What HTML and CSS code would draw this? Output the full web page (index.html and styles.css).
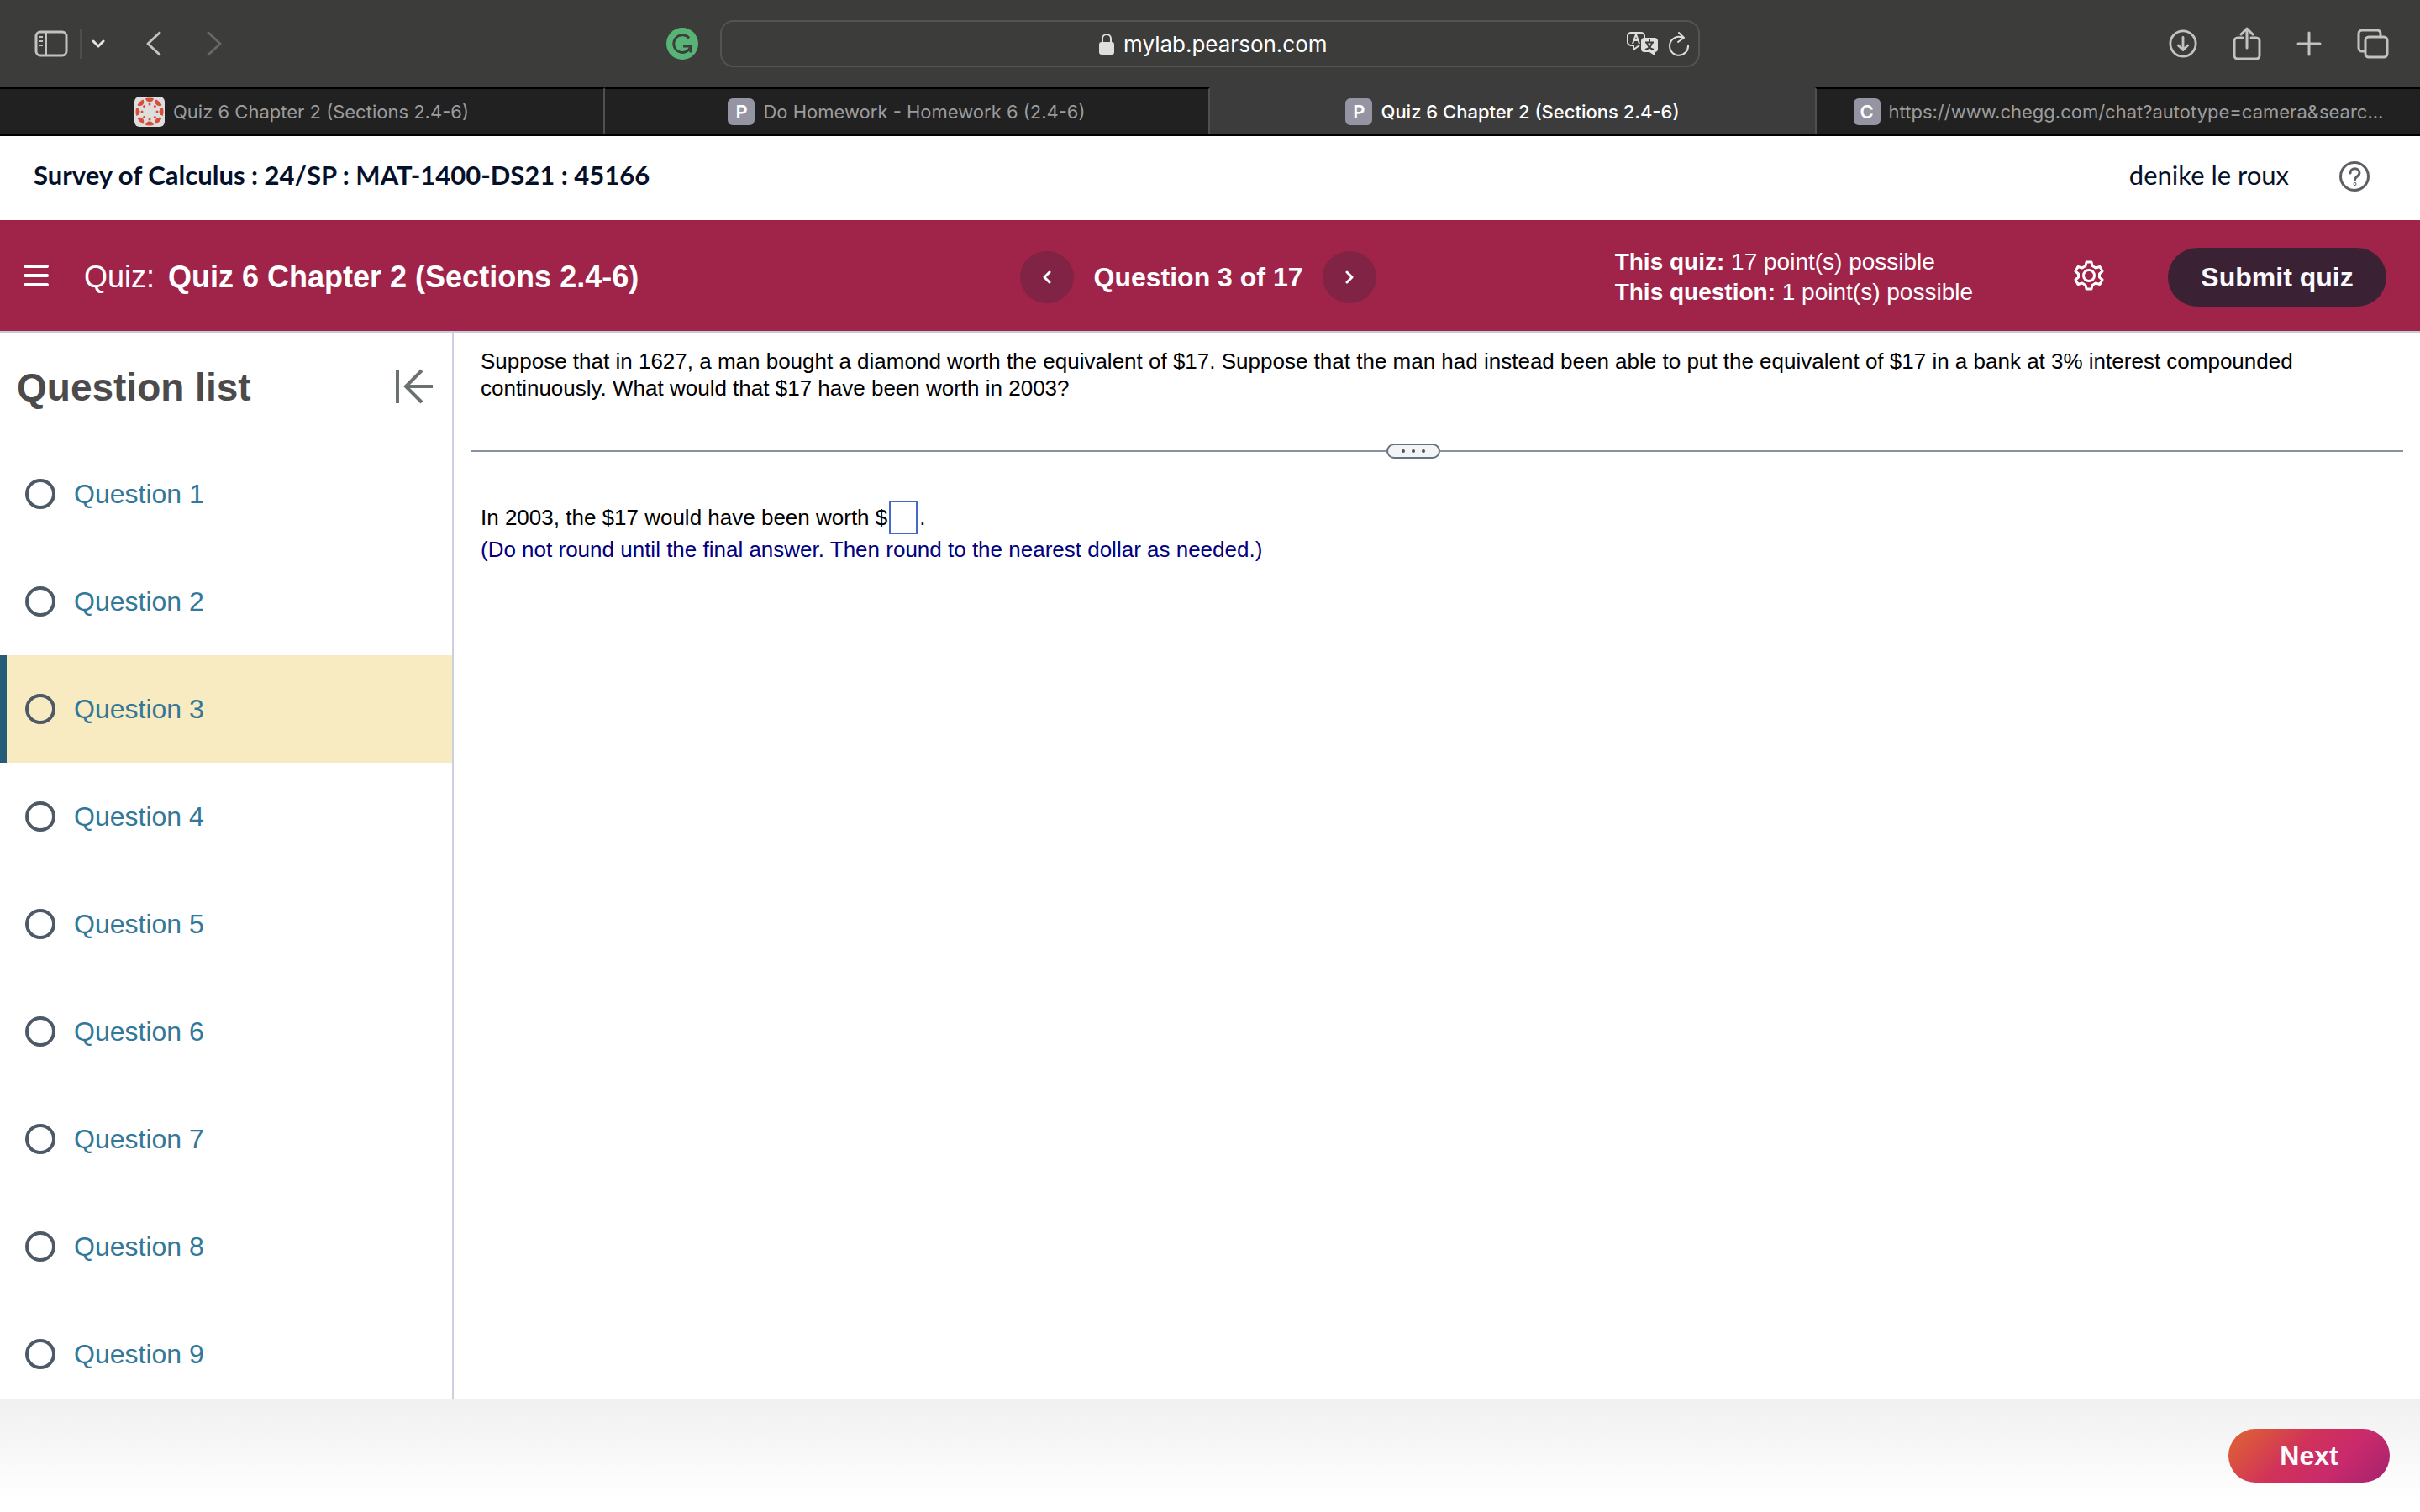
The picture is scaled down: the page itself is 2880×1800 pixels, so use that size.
FILE: index.html
```html
<!DOCTYPE html>
<html lang="en">
<head>
<meta charset="utf-8">
<title>Quiz 6 Chapter 2 (Sections 2.4-6)</title>
<link rel="stylesheet" href="styles.css">
</head>
<body>
<div class="toolbar">
  <div class="tools-left">
    <button class="icon-btn" aria-label="Show sidebar"><svg width="40" height="32" viewBox="0 0 40 32" fill="none" stroke="#c2c2c0" stroke-width="3"><rect x="2" y="2" width="36" height="28" rx="5"/><path d="M14 2v28" stroke-width="2"/><path d="M6 8h4M6 13h4M6 18h4" stroke-width="2"/></svg></button>
    <span class="tool-divider"></span>
    <button class="icon-btn" aria-label="Tab groups"><svg width="16" height="12" viewBox="0 0 16 12" fill="none" stroke="#e4e4e2" stroke-width="3" stroke-linecap="round" stroke-linejoin="round"><path d="M2 3l6 6 6-6"/></svg></button>
    <button class="icon-btn back" aria-label="Back"><svg width="20" height="32" viewBox="0 0 20 32" fill="none" stroke="#c2c2c0" stroke-width="3" stroke-linecap="round" stroke-linejoin="round"><path d="M17 3L3 16l14 13"/></svg></button>
    <button class="icon-btn forward" aria-label="Forward"><svg width="20" height="32" viewBox="0 0 20 32" fill="none" stroke="#676765" stroke-width="3" stroke-linecap="round" stroke-linejoin="round"><path d="M3 3l14 13L3 29"/></svg></button>
    <button class="icon-btn grammar" aria-label="Grammar check"><svg width="38" height="38" viewBox="0 0 38 38" fill="none"><circle cx="19" cy="19" r="19" fill="#58b476"/><path d="M27 12.500a10.300 10.300 0 1 0 2 9.500H20M29 22v7.500" stroke="#3b403b" stroke-width="3"/></svg></button>
  </div>
  <div class="address">
    <div class="address-text">
      <svg width="20" height="28" viewBox="0 0 20 28"><rect x="1" y="12" width="18" height="15" rx="3" fill="#dededc"/><path d="M5 13V8a5 5 0 0 1 10 0v5" fill="none" stroke="#dededc" stroke-width="2"/></svg>
      <input class="address-input" type="text" value="mylab.pearson.com" aria-label="Address">
    </div>
    <button class="icon-btn" aria-label="Translate"><svg width="40" height="30" viewBox="0 0 40 30" fill="none"><path d="M16 17l-7 5v-5H6a4 4 0 0 1-4-4V6a4 4 0 0 1 4-4h12a4 4 0 0 1 4 4v2" stroke="#dededc" stroke-width="2"/><path d="M8 15l4-11 4 11M9 11h6" stroke="#dededc" stroke-width="2"/><path d="M22 8h12a4 4 0 0 1 4 4v9a4 4 0 0 1-4 4v4l-6-4h-6a4 4 0 0 1-4-4v-9a4 4 0 0 1 4-4z" fill="#dededc"/><path d="M28 10v3M23 13.500h10M31 14c-1 4-4 7-8 8M25 14c1 4 4 7 8 8" stroke="#3c3c3a" stroke-width="2"/></svg></button>
    <button class="icon-btn" aria-label="Reload"><svg width="26" height="30" viewBox="0 0 26 30" fill="none" stroke="#dededc" stroke-width="2" stroke-linecap="round" stroke-linejoin="round"><path d="M17 7.500A11 11 0 1 0 24 17M13 2l6 6-7 5"/></svg></button>
  </div>
  <div class="tools-right">
    <button class="icon-btn" aria-label="Downloads"><svg width="34" height="34" viewBox="0 0 36 36" fill="none" stroke="#c2c2c0" stroke-width="3" stroke-linecap="round" stroke-linejoin="round"><circle cx="18" cy="18" r="16"/><path d="M18 10v15M12 20l6 6 6-6"/></svg></button>
    <button class="icon-btn" aria-label="Share"><svg width="34" height="42" viewBox="0 0 34 42" fill="none" stroke="#c2c2c0" stroke-width="3" stroke-linecap="round" stroke-linejoin="round"><path d="M12 14H6a4 4 0 0 0-4 4v17a4 4 0 0 0 4 4h22a4 4 0 0 0 4-4V18a4 4 0 0 0-4-4h-6M17 26V4M10 10l7-7 7 7"/></svg></button>
    <button class="icon-btn" aria-label="New tab"><svg width="30" height="30" viewBox="0 0 30 30" fill="none" stroke="#c2c2c0" stroke-width="3" stroke-linecap="round"><path d="M15 2v26M2 15h26"/></svg></button>
    <button class="icon-btn" aria-label="Tab overview"><svg width="38" height="36" viewBox="0 0 38 36" fill="none" stroke="#c2c2c0" stroke-width="3"><rect x="10" y="10" width="26" height="24" rx="4"/><path d="M10 27H6a4 4 0 0 1-4-4V6a4 4 0 0 1 4-4h18a4 4 0 0 1 4 4v4"/></svg></button>
  </div>
</div>
<nav class="tabs" aria-label="Browser tabs">
  <a class="tab" href="#"><svg width="36" height="36" viewBox="0 0 36 36"><defs><clipPath id="disc"><circle cx="18" cy="18" r="16.500"/></clipPath></defs><rect width="36" height="36" rx="6" fill="#dedede"/><g fill="#d64f3c" clip-path="url(#disc)"><circle cx="18" cy="1.500" r="5"/><circle cx="18" cy="34.500" r="5"/><circle cx="1.500" cy="18" r="5"/><circle cx="34.500" cy="18" r="5"/><circle cx="6.300" cy="6.300" r="5"/><circle cx="29.700" cy="6.300" r="5"/><circle cx="6.300" cy="29.700" r="5"/><circle cx="29.700" cy="29.700" r="5"/><circle cx="18" cy="9" r="1.500"/><circle cx="18" cy="27" r="1.500"/><circle cx="9" cy="18" r="1.500"/><circle cx="27" cy="18" r="1.500"/><circle cx="11.600" cy="11.600" r="1.500"/><circle cx="24.400" cy="11.600" r="1.500"/><circle cx="11.600" cy="24.400" r="1.500"/><circle cx="24.400" cy="24.400" r="1.500"/></g></svg><span class="tab-title">Quiz 6 Chapter 2 (Sections 2.4-6)</span></a>
  <a class="tab" href="#"><span class="badge">P</span><span class="tab-title">Do Homework - Homework 6 (2.4-6)</span></a>
  <a class="tab active" href="#"><span class="badge">P</span><span class="tab-title">Quiz 6 Chapter 2 (Sections 2.4-6)</span></a>
  <a class="tab" href="#"><span class="badge">C</span><span class="tab-title">https://www.chegg.com/chat?autotype=camera&amp;searc...</span></a>
</nav>
<header class="course">
  <h1 class="course-name">Survey of Calculus : 24/SP : MAT-1400-DS21 : 45166</h1>
  <span class="user">denike le roux</span>
  <button class="icon-btn" aria-label="Help"><svg width="36" height="36" viewBox="0 0 36 36" fill="none" stroke="#5d6063" stroke-width="3" stroke-linecap="round"><circle cx="18" cy="18" r="16.500"/><path d="M13 14c0-7 11-7 11 0 0 4-5.500 4-5.500 8"/><circle cx="18.500" cy="27" r="0.500"/></svg></button>
</header>
<div class="quizbar">
  <div class="quiz-title">
    <button class="icon-btn menu" aria-label="Menu"><svg width="30" height="28" viewBox="0 0 30 28" stroke="#fff" stroke-width="4" stroke-linecap="round"><path d="M2 3h26M2 14h26M2 25h26"/></svg></button>
    <h2 class="quiz-name"><span class="quiz-label">Quiz:</span> Quiz 6 Chapter 2 (Sections 2.4-6)</h2>
  </div>
  <div class="stepper">
    <button class="step" aria-label="Previous question"><svg width="12" height="16" viewBox="0 0 12 16" fill="none" stroke="#fff" stroke-width="3" stroke-linecap="round" stroke-linejoin="round"><path d="M9 2L3 8l6 6"/></svg></button>
    <span class="step-text">Question 3 of 17</span>
    <button class="step" aria-label="Next question"><svg width="12" height="16" viewBox="0 0 12 16" fill="none" stroke="#fff" stroke-width="3" stroke-linecap="round" stroke-linejoin="round"><path d="M3 2l6 6-6 6"/></svg></button>
  </div>
  <div class="quiz-side">
    <div class="points">
      <div><b>This quiz:</b> 17 point(s) possible</div>
      <div><b>This question:</b> 1 point(s) possible</div>
    </div>
    <button class="icon-btn gear" aria-label="Settings"><svg width="36" height="36" viewBox="0 0 36 36" fill="none" stroke="#fff" stroke-width="3" stroke-linejoin="round"><path d="M14 6.500 15 2h6l1 4.500 4 2.500 5-1.500 3 5.500-3.500 3v4l3.500 3-3 5.500-5-1.500-4 2.500-1 4.500h-6l-1-4.500-4-2.500-5 1.500-3-5.500 3.500-3v-4L2 13l3-5.500L10 9z"/><circle cx="18" cy="18" r="6.500"/></svg></button>
    <button class="submit">Submit quiz</button>
  </div>
</div>
<div class="workspace">
  <aside class="sidebar">
    <div class="list-head">
      <h2 class="list-title">Question list</h2>
      <button class="icon-btn" aria-label="Collapse question list"><svg width="46" height="42" viewBox="0 0 46 42" fill="none" stroke="#6b7071" stroke-width="4"><path d="M3 1v40M45 21H13M32 2L13 21l19 19"/></svg></button>
    </div>
    <ul class="questions">
      <li><a class="question" href="#"><span class="status"></span>Question 1</a></li>
      <li><a class="question" href="#"><span class="status"></span>Question 2</a></li>
      <li><a class="question current" href="#" aria-current="true"><span class="status"></span>Question 3</a></li>
      <li><a class="question" href="#"><span class="status"></span>Question 4</a></li>
      <li><a class="question" href="#"><span class="status"></span>Question 5</a></li>
      <li><a class="question" href="#"><span class="status"></span>Question 6</a></li>
      <li><a class="question" href="#"><span class="status"></span>Question 7</a></li>
      <li><a class="question" href="#"><span class="status"></span>Question 8</a></li>
      <li><a class="question" href="#"><span class="status"></span>Question 9</a></li>
    </ul>
  </aside>
  <main class="exercise">
    <p class="prompt">Suppose that in 1627, a man bought a diamond worth the equivalent of $17. Suppose that the man had instead been able to put the equivalent of $17 in a bank at 3% interest compounded continuously. What would that $17 have been worth in 2003?</p>
    <div class="splitter"><span class="rule"></span><button class="handle" aria-label="Resize panes"><i></i><i></i><i></i></button><span class="rule"></span></div>
    <div class="response">
      <div class="answer-line"><label for="answer">In 2003, the $17 would have been worth $</label><input class="answer" id="answer" type="text">.</div>
      <p class="hint">(Do not round until the final answer. Then round to the nearest dollar as needed.)</p>
    </div>
  </main>
</div>
<footer class="footer"><button class="next">Next</button></footer>
</body>
</html>
```
FILE: styles.css
```css
* { box-sizing: border-box; }

body {
  margin: 0;
  height: 100vh;
  display: flex;
  flex-direction: column;
  overflow: hidden;
  background: #fff;
  font-family: "Liberation Sans", Arial, sans-serif;
}

h1, h2, p, ul { margin: 0; padding: 0; }
ul { list-style: none; }
a { text-decoration: none; color: inherit; }
button, input { font: inherit; }
svg { display: block; flex: none; }

.icon-btn {
  display: flex;
  padding: 0;
  border: 0;
  background: none;
}

/* Browser chrome */
.toolbar {
  display: grid;
  grid-template-columns: 1fr minmax(400px, 1166px) 1fr;
  align-items: center;
  height: 104px;
  flex: none;
  background: #3c3c3a;
}
.tools-left {
  display: flex;
  align-items: center;
  padding-left: 41px;
}
.tool-divider {
  width: 2px;
  height: 36px;
  margin: 0 12px 0 14px;
  background: #4e4e4c;
}
.back { margin-left: 48px; }
.forward { margin-left: 52px; }
.grammar { margin: 0 26px 0 auto; }
.address {
  display: flex;
  align-items: center;
  gap: 10px;
  height: 56px;
  padding-right: 10px;
  border: 2px solid #545452;
  border-radius: 16px;
}
.address-text {
  display: flex;
  flex: 1;
  align-items: center;
  justify-content: center;
  gap: 10px;
  padding-left: 108px;
}
.address-input {
  width: 248px;
  padding: 0;
  border: 0;
  background: none;
  color: #fff;
  font-family: Inter, sans-serif;
  font-size: 26px;
}
.tools-right {
  display: flex;
  align-items: center;
  justify-content: flex-end;
  gap: 42px;
  padding-right: 37px;
}

.tabs {
  display: grid;
  grid-template-columns: repeat(4, 1fr);
  height: 58px;
  flex: none;
  border-bottom: 2px solid #000;
  background: #212121;
  font-family: Inter, sans-serif;
  font-size: 22px;
  color: #9c9c9c;
}
.tab {
  display: flex;
  align-items: center;
  justify-content: center;
  gap: 10px;
  min-width: 0;
  border-top: 2px solid #000;
  border-right: 2px solid #505050;
}
.tab:last-child {
  border-right: 0;
  border-left: 2px solid #505050;
}
.tab.active {
  border-top-color: #3c3c3c;
  border-right: 0;
  background: #3c3c3c;
  color: #fff;
  font-weight: 500;
}
.tab-title { white-space: nowrap; }
.badge {
  width: 32px;
  border-radius: 6px;
  background: #9494a2;
  color: #fff;
  font-weight: 600;
  line-height: 32px;
  text-align: center;
}

/* Course header */
.course {
  display: flex;
  align-items: center;
  height: 100px;
  flex: none;
  padding: 0 60px 4px 40px;
  color: #05112a;
  font-family: Lato, sans-serif;
  font-size: 31px;
}
.course-name {
  flex: 1;
  padding-bottom: 4px;
  font-size: 31px;
  font-weight: 700;
}
.user { margin-right: 60px; padding-bottom: 4px; }

.quizbar {
  display: grid;
  grid-template-columns: 1fr auto 1fr;
  align-items: center;
  height: 134px;
  flex: none;
  padding: 4px 40px 0 12px;
  border-bottom: 2px solid #c7cbd8;
  background: #a0244a;
  color: #fff;
}
.quiz-title {
  display: flex;
  align-items: center;
  gap: 42px;
  padding-left: 16px;
}
.menu { margin-bottom: 4px; }
.quiz-name { font-size: 36px; }
.quiz-label { margin-right: 6px; font-weight: 400; }
.stepper {
  display: flex;
  align-items: center;
  gap: 24px;
}
.step {
  display: flex;
  align-items: center;
  justify-content: center;
  width: 64px;
  height: 62px;
  padding: 0;
  border: 0;
  border-radius: 50%;
  background: #802344;
}
.step-text { font-size: 32px; font-weight: 700; }
.quiz-side {
  display: flex;
  align-items: center;
  justify-content: flex-end;
}
.points { font-size: 28px; line-height: 36px; }
.gear { margin: 0 76px 4px 120px; }
.submit {
  width: 260px;
  height: 70px;
  border: 0;
  border-radius: 35px;
  background: #3a2234;
  color: #fafaff;
  font-size: 32px;
  font-weight: 700;
}

/* Question list and exercise */
.workspace {
  display: flex;
  flex: 1;
  min-height: 0;
}
.sidebar {
  width: 540px;
  flex: none;
  overflow: hidden;
  border-right: 2px solid #cdd0de;
}
.list-head {
  display: flex;
  align-items: center;
  justify-content: space-between;
  height: 128px;
  padding: 0 22px 0 20px;
}
.list-title { padding-top: 2px; color: #4b4b4b; font-size: 46px; }
.question {
  display: flex;
  align-items: center;
  gap: 22px;
  height: 128px;
  padding-left: 22px;
  border-left: 8px solid transparent;
  color: #31789a;
  font-size: 32px;
}
.question.current {
  border-left-color: #255c78;
  background: #f8ebc2;
}
.status {
  width: 36px;
  height: 36px;
  border: 4px solid #4d5966;
  border-radius: 50%;
}
.exercise {
  flex: 1;
  min-width: 0;
  padding: 18px 20px 0;
  font-size: 26px;
  line-height: 32px;
}
.prompt { padding: 0 60px 0 12px; }
.splitter {
  display: flex;
  align-items: center;
  margin-top: 50px;
}
.rule { flex: 1; height: 2px; background: #8793a2; }
.rule:first-child { flex-grow: 1090; }
.rule:last-child { flex-grow: 1146; }
.handle {
  display: flex;
  align-items: center;
  justify-content: center;
  gap: 8px;
  width: 64px;
  height: 18px;
  padding: 0;
  border: 2px solid #66727f;
  border-radius: 9px;
  background: #f2f4f6;
}
.handle i { width: 4px; height: 4px; border-radius: 50%; background: #4b545e; }
.response { padding: 50px 12px 0; }
.answer-line { display: flex; align-items: center; }
.answer {
  width: 34px;
  height: 40px;
  margin: 0 2px;
  padding: 0;
  border: 2px solid #4668c8;
  background: #fff;
}
.hint { padding-top: 2px; color: #000080; }

.footer {
  display: flex;
  justify-content: flex-end;
  align-items: center;
  height: 134px;
  flex: none;
  padding-right: 36px;
  background: linear-gradient(#f0f0f0, #fff 90%);
}
.next {
  width: 192px;
  height: 64px;
  border: 0;
  border-radius: 32px;
  background: linear-gradient(135deg, #dc5a3a 10%, #d0325a 42%, #c92a6c 68%, #a4226c);
  color: #fafaff;
  font-size: 32px;
  font-weight: 700;
}
```
